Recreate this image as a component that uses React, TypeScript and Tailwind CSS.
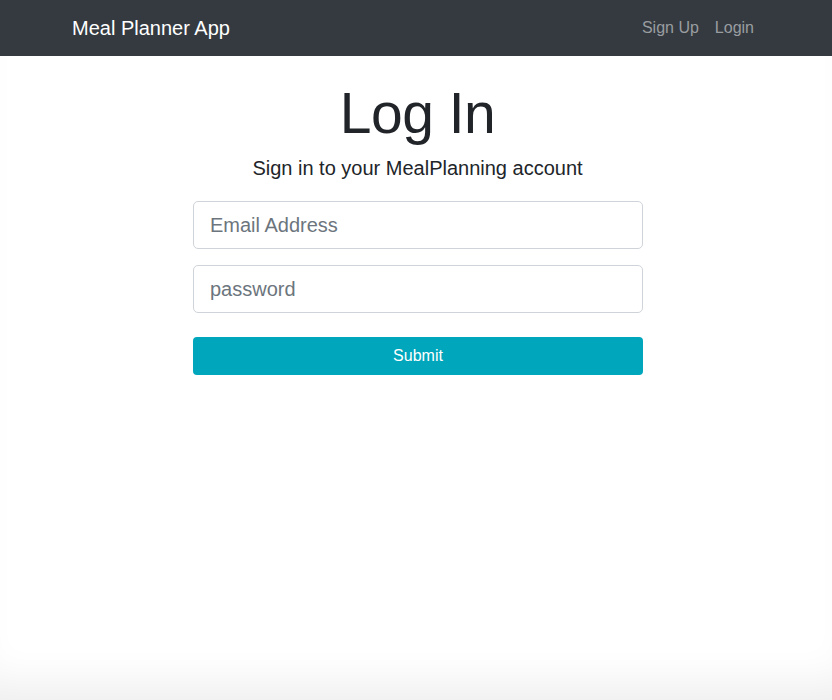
import React from "react";

export default function App() {
  return (
    <div
      className="min-h-[700px] bg-white flex flex-col shadow-[inset_0_-40px_40px_-24px_rgba(0,0,0,0.07)]"
      style={{ fontFamily: '"Liberation Sans", Arial, Helvetica, sans-serif' }}
    >
      <nav className="h-[56px] bg-[#343a40] flex items-center">
        <div className="w-[720px] mx-auto pl-[16px] pr-[14px] flex items-center justify-between">
          <span className="text-white text-[20px] leading-[30px]">Meal Planner App</span>
          <div className="flex items-center">
            <a className="text-[#9a9da0] text-[16px] px-[8px] leading-[24px]">Sign Up</a>
            <a className="text-[#9a9da0] text-[16px] px-[8px] leading-[24px]">Login</a>
          </div>
        </div>
      </nav>
      <main className="flex flex-col items-center pl-[3px] pt-[22px]">
        <h1 className="text-[#212529] text-[57px] leading-[70px] font-light tracking-[-0.5px]">Log In</h1>
        <p className="text-[#212529] text-[20px] leading-[30px] font-light mt-[5px]">
          Sign in to your MealPlanning account
        </p>
        <form className="w-[450px] flex flex-col mt-[18px] ml-[1px]" onSubmit={(e) => e.preventDefault()}>
          <input
            type="email"
            placeholder="Email Address"
            className="h-[48px] w-full border border-[#ced4da] rounded-[5px] px-[16px] text-[20px] text-[#495057] placeholder:text-[#6c757d] outline-none"
          />
          <input
            type="password"
            placeholder="password"
            className="h-[48px] w-full border border-[#ced4da] rounded-[5px] px-[16px] text-[20px] text-[#495057] placeholder:text-[#6c757d] outline-none mt-[16px]"
          />
          <button
            type="submit"
            className="h-[38px] w-full bg-[#00a6bb] rounded-[4px] text-white text-[16px] mt-[24px]"
          >
            Submit
          </button>
        </form>
      </main>
    </div>
  );
}
